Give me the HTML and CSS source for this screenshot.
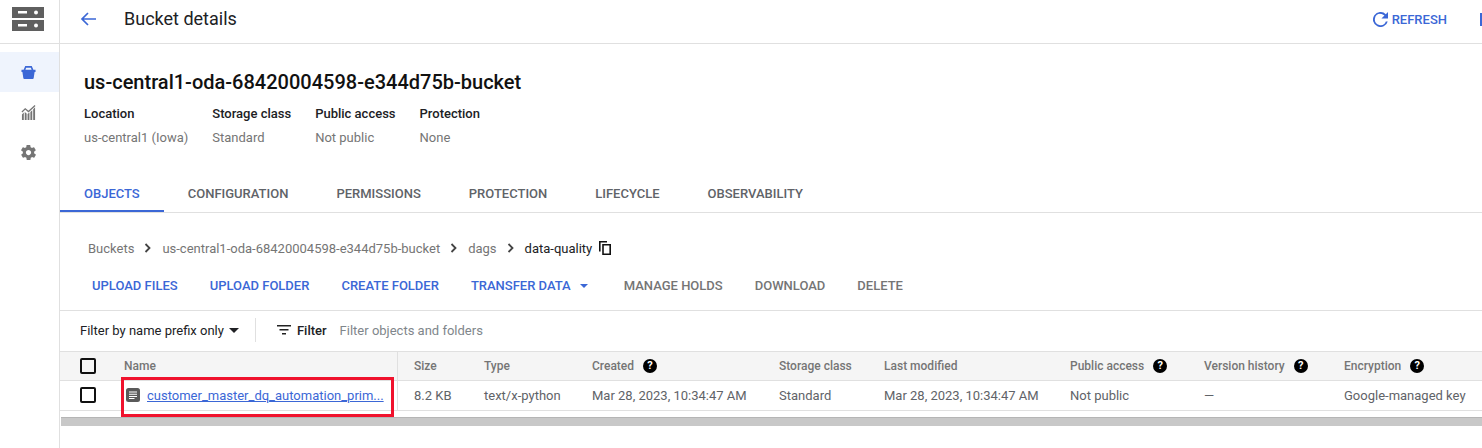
FILE: index.html
```html
<!DOCTYPE html>
<html lang="en">
<head>
    <meta charset="UTF-8" />
    <title>Bucket details</title>
    <link rel="stylesheet" href="styles.css">
</head>
<body>
    <nav class="rail">
        <div class="rail-logo">
            <svg width="32" height="24" viewBox="0 0 32 24"><path fill="#5f5f5f" d="M0 0h32v11H0zM0 13h32v11H0z"/><path fill="#fff" d="M6 4h9v2.500H6zM6 17h9v2.500H6z"/><circle cx="24" cy="5.500" r="2" fill="#fff"/><circle cx="24" cy="18.500" r="2" fill="#fff"/></svg>
        </div>
        <a class="rail-item active">
            <svg width="15" height="15" viewBox="0 0 16 16"><path fill="#3b67d6" d="M4.500 1h7L13.200 5H15.500v2.500h-1l-1 6.700c-.1.500-.5.800-1 .8H3.500c-.5 0-.9-.3-1-.8l-1-6.700h-1V5h2.300zM5.500 2.800 4.700 5h6.600l-.8-2.200z"/></svg>
        </a>
        <a class="rail-item">
            <svg width="15" height="15" viewBox="0 0 16 16"><path fill="#757575" d="M1 10 3 8v8H1zM4 7.500 6 9v7H4zM7 9.500l2-1.500v8H7zM10 7.500l2-2V16h-2zM13 4.500l2-2V16h-2z"/><path fill="none" stroke="#757575" stroke-width="1.300" d="M1 7.500 4.500 4 8 7l7-6.500"/></svg>
        </a>
        <a class="rail-item">
            <svg width="15" height="15" viewBox="2 2 20 20"><path fill="#757575" d="M19.400 13c.1-.3.100-.7.100-1s0-.7-.1-1l2.100-1.600c.2-.2.200-.4.100-.6l-2-3.500c-.1-.2-.4-.3-.6-.2l-2.500 1c-.5-.4-1.100-.7-1.700-1l-.4-2.600c0-.3-.2-.5-.5-.5h-4c-.3 0-.5.200-.5.400l-.4 2.700c-.6.200-1.100.6-1.700 1l-2.500-1c-.2-.1-.5 0-.6.200l-2 3.500c-.1.200-.1.500.1.600L4.600 11c0 .3-.1.700-.1 1s0 .7.1 1l-2.100 1.600c-.2.200-.2.400-.1.600l2 3.500c.1.200.4.300.6.200l2.500-1c.5.400 1.100.7 1.700 1l.4 2.600c0 .3.200.5.500.5h4c.3 0 .5-.2.500-.4l.4-2.700c.6-.2 1.200-.6 1.700-1l2.500 1c.2.100.5 0 .6-.2l2-3.500c.1-.2.100-.5-.1-.6zM12 15.500c-1.900 0-3.500-1.600-3.500-3.500s1.600-3.500 3.500-3.500 3.500 1.600 3.500 3.500-1.600 3.500-3.500 3.500z"/></svg>
        </a>
    </nav>

    <div class="main">
        <header class="topbar">
            <svg class="back" width="16" height="14" viewBox="0 0 16 14"><path fill="none" stroke="#3b67d6" stroke-width="1.700" d="M16 7H2M8 1 2 7l6 6"/></svg>
            <h1>Bucket details</h1>
            <a class="refresh">
                <svg width="15" height="15" viewBox="4 4 16 16"><path fill="#3b67d6" d="M17.650 6.350A8 8 0 1 0 19.730 14h-2.080A6 6 0 1 1 12 6c1.660 0 3.140.69 4.220 1.780L13 11h7V4z"/></svg>
                REFRESH
            </a>
            <span class="topbar-edge"></span>
        </header>

        <section class="summary">
            <h2>us-central1-oda-68420004598-e344d75b-bucket</h2>
            <div class="meta">
                <div><b>Location</b><span>us-central1 (Iowa)</span></div>
                <div><b>Storage class</b><span>Standard</span></div>
                <div><b>Public access</b><span>Not public</span></div>
                <div><b>Protection</b><span>None</span></div>
            </div>
        </section>

        <div class="tabs">
            <a class="tab active">OBJECTS</a>
            <a class="tab">CONFIGURATION</a>
            <a class="tab">PERMISSIONS</a>
            <a class="tab">PROTECTION</a>
            <a class="tab">LIFECYCLE</a>
            <a class="tab">OBSERVABILITY</a>
        </div>

        <div class="crumbs">
            <span>Buckets</span>
            <svg class="chev" width="8" height="10" viewBox="0 0 8 10"><path fill="none" stroke="#444" stroke-width="1.800" d="m1.500 1 4 4-4 4"/></svg>
            <span>us-central1-oda-68420004598-e344d75b-bucket</span>
            <svg class="chev" width="8" height="10" viewBox="0 0 8 10"><path fill="none" stroke="#444" stroke-width="1.800" d="m1.500 1 4 4-4 4"/></svg>
            <span>dags</span>
            <svg class="chev" width="8" height="10" viewBox="0 0 8 10"><path fill="none" stroke="#444" stroke-width="1.800" d="m1.500 1 4 4-4 4"/></svg>
            <span class="current">data-quality</span>
            <svg class="copy" width="12" height="14" viewBox="0 0 12 14"><path fill="none" stroke="#111" stroke-width="1.600" d="M.8 10.500V.8H8M4 3.800h7.200v9.400H4z"/></svg>
        </div>

        <div class="actions">
            <a class="on">UPLOAD FILES</a>
            <a class="on">UPLOAD FOLDER</a>
            <a class="on">CREATE FOLDER</a>
            <a class="on transfer">TRANSFER DATA<i class="caret blue"></i></a>
            <a>MANAGE HOLDS</a>
            <a>DOWNLOAD</a>
            <a>DELETE</a>
        </div>

        <div class="filter">
            <span class="prefix">Filter by name prefix only<i class="caret"></i></span>
            <span class="filter-sep"></span>
            <svg width="14" height="10" viewBox="0 0 14 10"><path fill="#222" d="M0 0h14v1.500H0zM2.500 4h9v1.500h-9zM5 8h4v1.500H5z"/></svg>
            <b>Filter</b>
            <span class="hint">Filter objects and folders</span>
        </div>

        <div class="table">
            <div class="row head">
                <div class="c-check"><i class="box"></i></div>
                <div class="c-name">Name</div>
                <div class="c-size">Size</div>
                <div>Type</div>
                <div>Created <i class="help">?</i></div>
                <div>Storage class</div>
                <div>Last modified</div>
                <div>Public access <i class="help">?</i></div>
                <div>Version history <i class="help">?</i></div>
                <div>Encryption <i class="help">?</i></div>
            </div>
            <div class="row">
                <div class="c-check"><i class="box"></i></div>
                <div class="c-name file">
                    <svg width="14" height="14" viewBox="0 0 14 14"><rect width="14" height="14" rx="2.500" fill="#5a5a5a"/><path fill="#fff" d="M3 3.500h8v1H3zM3 5.700h8v1H3zM3 7.900h8v1H3zM3 10.100h5.500v1H3z"/></svg>
                    <a>customer_master_dq_automation_prim...</a>
                </div>
                <div class="c-size">8.2 KB</div>
                <div>text/x-python</div>
                <div>Mar 28, 2023, 10:34:47 AM</div>
                <div>Standard</div>
                <div>Mar 28, 2023, 10:34:47 AM</div>
                <div>Not public</div>
                <div>—</div>
                <div>Google-managed key</div>
            </div>
            <div class="callout"></div>
        </div>
        <div class="scrollbar"></div>
    </div>
</body>
</html>
```

FILE: styles.css
```css
body {
    margin: 0;
    height: 448px;
    overflow: hidden;
    display: flex;
    background: #fff;
    color: #5f6368;
    font-family: Roboto, "Liberation Sans", sans-serif;
    font-size: 13px;
}
a {
    display: inline-block;
}

/* left rail */
.rail {
    flex: 0 0 59px;
    border-right: 1px solid #e0e0e0;
}
.rail-logo {
    height: 44px;
    padding: 7px 0 0 12px;
    box-sizing: border-box;
    border-bottom: 1px solid #e0e0e0;
}
.rail-logo svg {
    display: block;
}
.rail-item {
    display: flex;
    height: 40px;
    padding-right: 3px;
    align-items: center;
    justify-content: center;
}
.rail-item.active {
    margin-top: 8px;
    background: #eff4fd;
}

.main {
    flex: 1;
    min-width: 0;
}

/* top bar */
.topbar {
    height: 38px;
    padding: 0 0 5px 20px;
    display: flex;
    align-items: center;
    border-bottom: 1px solid #e0e0e0;
}
.back {
    margin-right: 28px;
}
.topbar h1 {
    margin: -2px 0 0;
    flex: 1;
    font-size: 18px;
    font-weight: 400;
    color: #202124;
}
.refresh {
    display: flex;
    align-items: center;
    gap: 4px;
    color: #3b67d6;
    font-weight: 500;
}
.topbar-edge {
    width: 2px;
    height: 13px;
    margin-left: 33px;
    background: #3b67d6;
}

/* bucket summary */
.summary {
    height: 129px;
    padding: 26px 0 0 24px;
    box-sizing: border-box;
}
.summary h2 {
    margin: 0;
    font-size: 20px;
    line-height: 24px;
    font-weight: 500;
    color: #111;
}
.meta {
    display: flex;
    gap: 24px;
    margin-top: 11px;
}
.meta b {
    display: block;
    margin-bottom: 6px;
    font-weight: 500;
    line-height: 18px;
    color: #202124;
}
.meta span {
    display: block;
    line-height: 18px;
    color: #757575;
}

/* tabs */
.tabs {
    display: flex;
    height: 39px;
    border-bottom: 1px solid #e0e0e0;
}
.tab {
    height: 39px;
    padding: 0 24px;
    line-height: 41px;
    font-weight: 500;
}
.tab.active {
    color: #3b67d6;
    box-shadow: inset 0 -2px #3b67d6;
}

/* breadcrumb */
.crumbs {
    display: flex;
    align-items: center;
    height: 24px;
    margin-top: 23px;
    padding-left: 28px;
    color: #757575;
}
.chev {
    margin: 0 10px;
}
.current {
    color: #202124;
}
.copy {
    margin-left: 7px;
}

/* actions */
.actions {
    display: flex;
    height: 49px;
    margin-top: 1px;
    padding-left: 32px;
    gap: 32px;
    align-items: center;
    border-bottom: 1px solid #e0e0e0;
    font-weight: 500;
    color: #757575;
}
.actions a {
    white-space: nowrap;
}
.actions .on {
    color: #3b67d6;
}
.actions .transfer {
    padding-right: 4px;
}
.caret {
    display: inline-block;
    margin-left: 5px;
    vertical-align: 2px;
    border-left: 5px solid transparent;
    border-right: 5px solid transparent;
    border-top: 5px solid #202124;
}
.caret.blue {
    margin-left: 9px;
    border-left-width: 4px;
    border-right-width: 4px;
    border-top: 4px solid #3b67d6;
}

/* filter bar */
.filter {
    display: flex;
    align-items: center;
    height: 38px;
    padding: 0 0 2px 20px;
    color: #202124;
}
.prefix {
    white-space: nowrap;
}
.filter-sep {
    width: 1px;
    height: 24px;
    margin: 0 21px 0 16px;
    background: #e0e0e0;
}
.filter b {
    margin: 0 13px 0 6px;
    font-weight: 500;
}
.hint {
    color: #80868b;
}

/* table */
.table {
    position: relative;
}
.row {
    display: grid;
    grid-template-columns: 64px 274px 86px 108px 187px 105px 186px 134px 140px 1fr;
    height: 29px;
    border-bottom: 1px solid #e0e0e0;
    color: #5f6368;
    white-space: nowrap;
}
.row > div {
    display: flex;
    align-items: center;
    padding-bottom: 1px;
}
.row.head {
    height: 28px;
    border-top: 1px solid #e0e0e0;
    background: #f5f5f5;
    font-size: 12px;
    font-weight: 500;
    color: #757575;
}
.c-check {
    padding-left: 20px;
}
.c-name {
    border-right: 1px solid #e0e0e0;
}
.c-size {
    padding-left: 16px;
}
.box {
    display: block;
    width: 12px;
    height: 12px;
    border: 2px solid #111;
    border-radius: 2px;
}
.help {
    display: block;
    width: 14px;
    height: 14px;
    margin-left: 9px;
    border-radius: 50%;
    background: #000;
    color: #fff;
    font-size: 11px;
    font-weight: 700;
    font-style: normal;
    line-height: 14px;
    text-align: center;
}
.file svg {
    margin: 0 7px 0 2px;
}
.file a {
    color: #3b67d6;
    text-decoration: underline;
}
.callout {
    position: absolute;
    left: 61px;
    top: 26px;
    width: 267px;
    height: 34px;
    border: 3px solid #f0122d;
}
.scrollbar {
    height: 8px;
    margin: 6px 0 0 1px;
    background: #c8c8c8;
    border-top: 1px solid #b5b5b5;
}
```
